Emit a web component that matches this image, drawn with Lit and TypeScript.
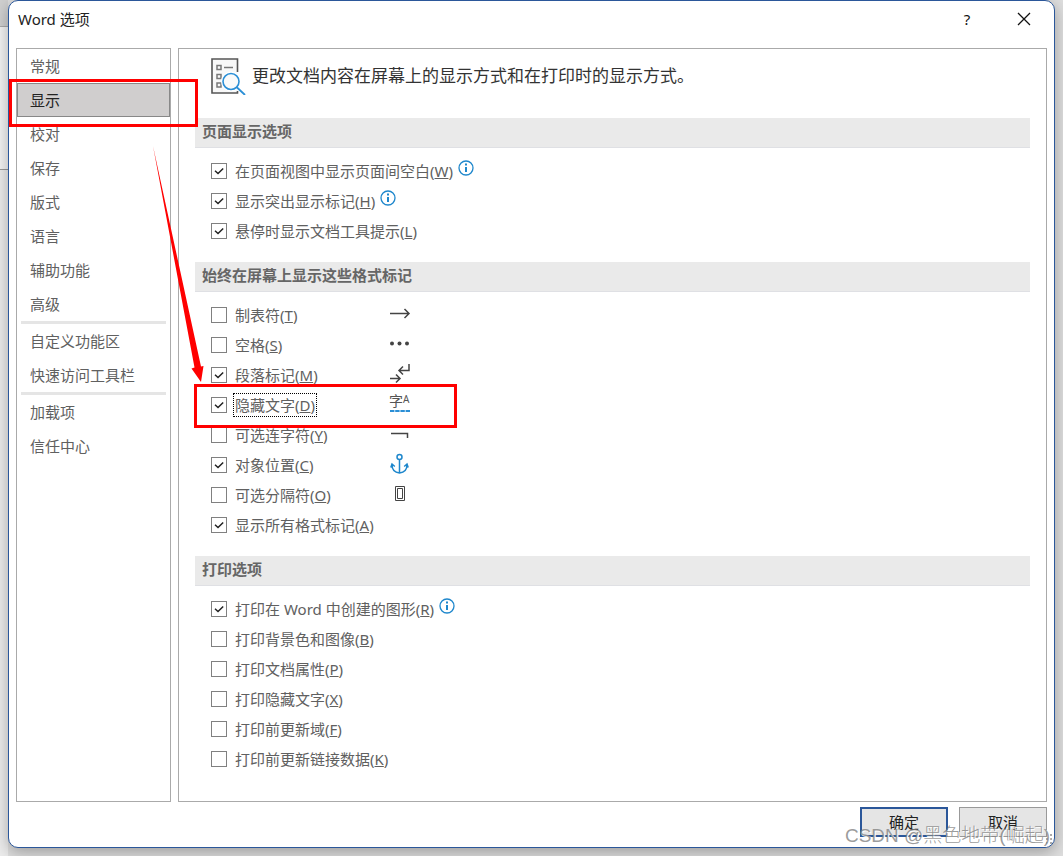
import { LitElement, html, svg, css, nothing, TemplateResult } from "lit";
import { customElement, property, state } from "lit/decorators.js";

interface Option {
  id: string;
  text: string;
  key: string;
  checked?: boolean;
  info?: boolean;
  mark?: string;
  focused?: boolean;
}

interface Section {
  title: string;
  options: Option[];
}

const NAV: string[][] = [
  ["常规", "显示", "校对", "保存", "版式", "语言", "辅助功能", "高级"],
  ["自定义功能区", "快速访问工具栏"],
  ["加载项", "信任中心"],
];

const SECTIONS: Section[] = [
  {
    title: "页面显示选项",
    options: [
      { id: "space", text: "在页面视图中显示页面间空白", key: "W", checked: true, info: true },
      { id: "highlight", text: "显示突出显示标记", key: "H", checked: true, info: true },
      { id: "tooltips", text: "悬停时显示文档工具提示", key: "L", checked: true },
    ],
  },
  {
    title: "始终在屏幕上显示这些格式标记",
    options: [
      { id: "tabs", text: "制表符", key: "T", mark: "tab" },
      { id: "spaces", text: "空格", key: "S", mark: "space" },
      { id: "paragraph", text: "段落标记", key: "M", checked: true, mark: "paragraph" },
      { id: "hidden", text: "隐藏文字", key: "D", checked: true, mark: "hidden", focused: true },
      { id: "hyphen", text: "可选连字符", key: "Y", mark: "hyphen" },
      { id: "anchor", text: "对象位置", key: "C", checked: true, mark: "anchor" },
      { id: "break", text: "可选分隔符", key: "O", mark: "break" },
      { id: "all", text: "显示所有格式标记", key: "A", checked: true },
    ],
  },
  {
    title: "打印选项",
    options: [
      { id: "p-draw", text: "打印在 Word 中创建的图形", key: "R", checked: true, info: true },
      { id: "p-bg", text: "打印背景色和图像", key: "B" },
      { id: "p-props", text: "打印文档属性", key: "P" },
      { id: "p-hidden", text: "打印隐藏文字", key: "X" },
      { id: "p-fields", text: "打印前更新域", key: "F" },
      { id: "p-links", text: "打印前更新链接数据", key: "K" },
    ],
  },
];

const MARKS: Record<string, TemplateResult> = {
  tab: svg`<path d="M1 11.500H20M15.500 7L20 11.500L15.500 16" stroke="#444" stroke-width="1.500"/>`,
  space: svg`<g fill="#444"><circle cx="3" cy="11.500" r="2"/><circle cx="10.500" cy="11.500" r="2"/><circle cx="18" cy="11.500" r="2"/></g>`,
  paragraph: svg`<path d="M20 2V8.500H10.500M14 4.500L10 8.500L14 12.500M1 16.500H10.500M7 12.500L11 16.500L7 20.500" stroke="#444" stroke-width="1.500"/>`,
  hidden: svg`<path d="M1 19H21" stroke="#2b8fd6" stroke-width="2" stroke-dasharray="4.400 .8"/>`,
  hyphen: svg`<path d="M2 11.500H18.500V16" stroke="#444" stroke-width="1.500"/>`,
  anchor: svg`<g stroke="#1e87cc" stroke-width="1.500"><circle cx="10.500" cy="5" r="2.500"/><path d="M10.500 7.500V21M3 13C3 18 6.500 20.500 10.500 21C14.500 20.500 18 18 18 13M1.800 15.500L3 12L5.800 14.500M19.200 15.500L18 12L15.200 14.500"/></g>`,
  break: svg`<path d="M6.500 4.500H15.500V18.500H6.500ZM8.500 6.500H13.500V16.500H8.500Z" stroke="#444"/>`,
};

@customElement("option-row")
class OptionRow extends LitElement {
  @property({ attribute: false }) option!: Option;

  static styles = css`
    :host { display: flex; align-items: center; height: 30px; }
    .choice { display: flex; align-items: center; }
    .box {
      appearance: none; box-sizing: border-box; flex: none;
      width: 16px; height: 16px; margin: 0 6px 0 0;
      border: 1px solid #808080; background: #fff;
    }
    .box:checked {
      background-image: url("data:image/svg+xml,%3Csvg xmlns='http://www.w3.org/2000/svg' viewBox='0 0 14 14'%3E%3Cpath d='M3 6.800L6 9.500L11.200 4.500' fill='none' stroke='%23222' stroke-width='1.500'/%3E%3C/svg%3E");
    }
    .text { padding: 1px 2px; line-height: 22px; white-space: nowrap; }
    .focused { outline: 1px dotted #000; outline-offset: -1px; }
    .with-mark { width: 178px; }
    .info { width: 16px; height: 16px; margin: 0 0 6px 3px; }
    .mark { position: relative; width: 22px; height: 24px; margin-bottom: 2px; }
    .mark svg { display: block; width: 22px; height: 24px; fill: none; }
    .glyph { display: flex; position: absolute; inset: 0; color: #555; font-size: 14px; line-height: 18px; }
    .small { font-size: 10px; line-height: 14px; }
  `;

  render() {
    const o = this.option;
    return html`
      <label class="choice ${o.mark ? "with-mark" : ""}">
        <input class="box" type="checkbox" name=${o.id} .checked=${!!o.checked} />
        <span class="text ${o.focused ? "focused" : ""}">${o.text}(<u>${o.key}</u>)</span>
      </label>
      ${o.info
        ? html`<svg class="info" viewBox="0 0 16 16" aria-hidden="true">
            <circle cx="8" cy="8" r="7" fill="#fff" stroke="#1e87cc" stroke-width="1.300" />
            <path d="M8 3.500V5.500M8 7V12" stroke="#1e87cc" stroke-width="2" />
          </svg>`
        : nothing}
      ${o.mark
        ? html`<span class="mark" aria-hidden="true">
            <svg viewBox="0 0 22 24">${MARKS[o.mark]}</svg>
            ${o.mark === "hidden" ? html`<span class="glyph">字<span class="small">A</span></span>` : nothing}
          </span>`
        : nothing}
    `;
  }
}

@customElement("app-root")
class AppRoot extends LitElement {
  @state() private current = "显示";

  static styles = css`
    :host {
      display: block; position: relative; box-sizing: border-box;
      min-height: 100vh; padding: 0 8px 8px; overflow: hidden;
      background:
        linear-gradient(#d0d0d0 0 26px, #aaa 26px 27px, #f4f4f4 27px 169px, #999 169px 170px, #ececec 170px) left / 8px 100% no-repeat,
        #dedede;
      font: 15px/22px "Noto Sans", "Noto Sans CJK SC", sans-serif;
      color: #606060;
    }
    .dialog {
      display: flex; flex-direction: column; box-sizing: border-box;
      min-height: calc(100vh - 8px);
      border: 1px solid #2b579a; border-radius: 10px; background: #fff;
      box-shadow: 0 4px 16px rgba(0, 0, 0, 0.3);
    }
    .titlebar { display: flex; align-items: center; height: 36px; padding: 0 16px 0 9px; margin-bottom: 11px; color: #222; }
    .title { flex: 1; margin: 0; font-size: 15px; font-weight: 400; }
    .tool { width: 28px; height: 28px; padding: 0; border: 0; background: none; color: #111; font: inherit; }
    .tools { display: flex; gap: 29px; }
    .tool svg { display: block; margin: auto; }
    .body { display: flex; flex: 1; gap: 7px; padding: 0 7px; }
    .nav { flex: none; box-sizing: border-box; width: 155px; border: 1px solid #aaa; }
    .group { margin: 0; padding: 0; list-style: none; }
    .group + .group::before { content: ""; display: block; height: 3px; margin: 0 4px; background: #e5e5e5; }
    .item {
      display: block; box-sizing: border-box; width: 100%; height: 34px; padding: 0 12px;
      border: 1px solid transparent; background: none; color: inherit; font: inherit; text-align: left;
    }
    .active { border-color: #888; background: #d0cece; color: #222; }
    .panel { flex: 1; border: 1px solid #aaa; padding: 0 16px; }
    .intro { display: flex; align-items: center; gap: 6px; height: 54px; padding: 0 16px; margin-bottom: 15px; color: #333; }
    .lead { margin: 0; font-size: 17px; line-height: 24px; }
    .section { margin-bottom: 16px; }
    .heading {
      box-sizing: border-box; height: 30px; margin: 0 0 8px; padding: 2px 7px;
      border-bottom: 1px solid #dfe0e4; background: #eaeaea; color: #666; font-size: 15px; font-weight: 700; line-height: 22px;
    }
    .rows { padding-left: 16px; }
    .footer { display: flex; justify-content: flex-end; gap: 11px; padding: 5px 7px 10px; }
    .button { width: 88px; height: 30px; padding: 0; border: 1px solid #999; background: #e5e5e5; color: #222; font: inherit; }
    .primary { border: 2px solid #2b579a; }
    .notes { position: absolute; left: 0; top: 0; pointer-events: none; }
    .grip { position: absolute; right: 10px; bottom: 10px; }
    .watermark {
      position: absolute; right: 13px; bottom: 6px; pointer-events: none;
      color: rgba(130, 130, 130, 0.8); font-family: "Liberation Sans", "Noto Sans CJK SC", sans-serif;
      font-size: 19px; font-weight: 300; line-height: 28px; text-shadow: 1px 1px 0 #fff;
    }
  `;

  render() {
    return html`
      <main class="dialog">
        <header class="titlebar">
          <h1 class="title">Word 选项</h1>
          <div class="tools">
            <button class="tool" aria-label="帮助">?</button>
            <button class="tool" aria-label="关闭">
              <svg width="14" height="14" viewBox="0 0 14 14"><path d="M1 1L13 13M13 1L1 13" stroke="#111" stroke-width="1.300" /></svg>
            </button>
          </div>
        </header>
        <div class="body">
          <nav class="nav">
            ${NAV.map(
              (group) => html`<ul class="group">
                ${group.map(
                  (name) => html`<li><button
                    class="item ${name === this.current ? "active" : ""}"
                    @click=${() => (this.current = name)}
                  >${name}</button></li>`
                )}
              </ul>`
            )}
          </nav>
          <div class="panel">
            <div class="intro">
              <svg width="35" height="38" viewBox="0 0 35 38" fill="none" aria-hidden="true">
                <path d="M26.500 15V2H1V36H26.500V34" fill="#f8f8f8" stroke="#555" stroke-width="1.600" />
                <path d="M6 8.500H10V12.500H6ZM6 17.500H10V21.500H6ZM6 26H10V30H6ZM13 10.500H22" stroke="#777" stroke-width="1.500" />
                <circle cx="20" cy="24.500" r="10" fill="#fff" />
                <circle cx="20" cy="24.500" r="8" fill="#fafafa" stroke="#2b8fd6" stroke-width="1.600" />
                <path d="M25.500 30L34 38" stroke="#2b8fd6" stroke-width="1.800" />
              </svg>
              <p class="lead">更改文档内容在屏幕上的显示方式和在打印时的显示方式。</p>
            </div>
            ${SECTIONS.map(
              (s) => html`<section class="section">
                <h2 class="heading">${s.title}</h2>
                <div class="rows">${s.options.map((o) => html`<option-row .option=${o}></option-row>`)}</div>
              </section>`
            )}
          </div>
        </div>
        <footer class="footer">
          <button class="button primary">确定</button>
          <button class="button">取消</button>
        </footer>
      </main>
      <svg class="notes" width="460" height="430" viewBox="0 0 460 430" fill="none" aria-hidden="true">
        <path d="M10.500 80.500H196.500V125.500H10.500ZM195.500 385.500H455.500V426.500H195.500Z" stroke="#f00" stroke-width="3" />
        <path d="M153 146L201 366.500L203.500 366L201 382L191.500 368.500L194.500 367.500Z" fill="#f00" />
      </svg>
      <svg class="grip" width="8" height="12" viewBox="0 0 8 12" fill="#aaa" aria-hidden="true">
        <path d="M5 0H7V2H5ZM5 4H7V6H5ZM1 4H3V6H1ZM5 8H7V10H5ZM1 8H3V10H1Z" />
      </svg>
      <div class="watermark">CSDN @黑色地带(崛起)</div>
    `;
  }
}
